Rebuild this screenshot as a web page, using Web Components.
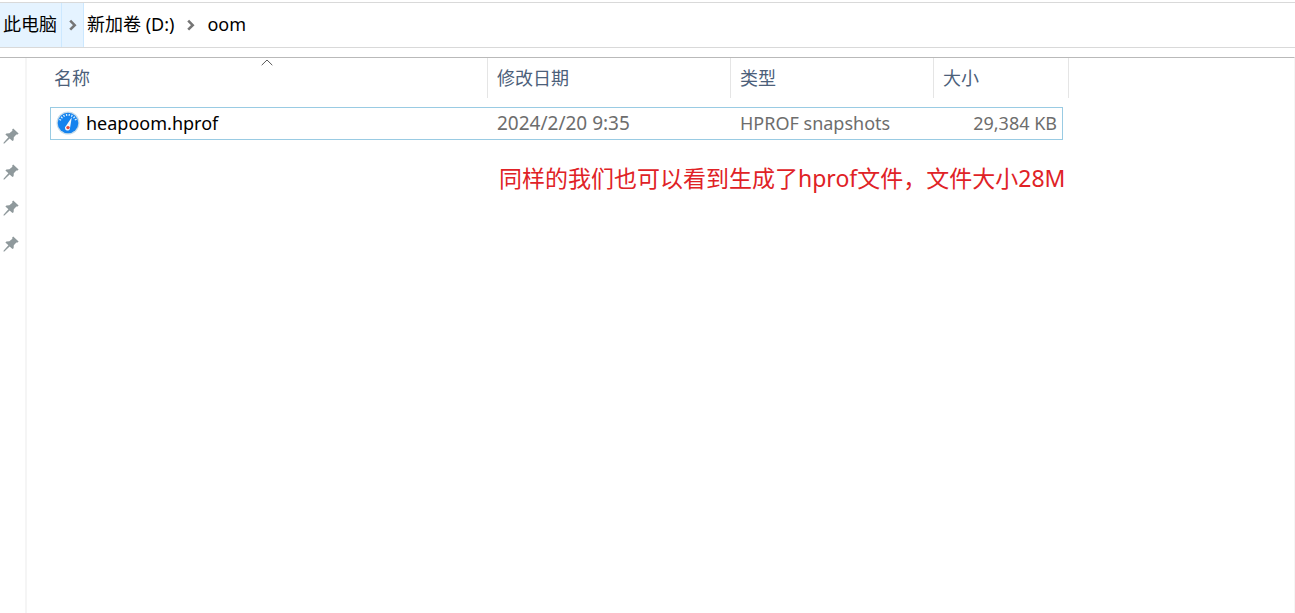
<!DOCTYPE html>
<html lang="zh-CN">
<head>
<meta charset="utf-8">
<title>oom</title>
<style>
html, body { margin: 0; height: 100%; background: #fff; }
body { font: 18px/24px "Noto Sans", "Noto Sans CJK SC", sans-serif; color: #000; }
</style>
</head>
<body>
<file-explorer></file-explorer>
<script>
const define = (name, html) => {
  const template = document.createElement('template');
  template.innerHTML = html;
  customElements.define(name, class extends HTMLElement {
    constructor() {
      super();
      this.attachShadow({ mode: 'open' }).append(template.content.cloneNode(true));
    }
  });
};

define('chevron-icon', `
<style>:host { display: block; width: 8px; height: 12px; } svg { display: block; }</style>
<svg width="8" height="12" viewBox="0 0 8 12" fill="none" stroke="#757575" stroke-width="2.6"><path d="M1.2 1.7 5.7 6.2 1.2 10.7"/></svg>`);

define('pin-icon', `
<style>:host { display: block; width: 16px; height: 16px; } svg { display: block; }</style>
<svg width="16" height="16" viewBox="0 0 16 16" fill="#8f999c"><path d="M10.2.6 15.6 5.6 14.6 6.5 13.4 6.4 10.8 9.2 10.6 12.2 9.5 13 6.6 10.4 1.4 15.4.4 15.6.7 14.4 5.4 9.2 2.4 6.4 3.4 5.4 6.4 5.2 9.4 2.7 9.2 1.4Z"/></svg>`);

define('gauge-icon', `
<style>:host { display: block; width: 24px; height: 24px; } svg { display: block; }</style>
<svg width="24" height="24" viewBox="0 0 24 24">
  <circle cx="12" cy="12" r="11.5" fill="#c9dce9"/>
  <circle cx="12" cy="12" r="10.3" fill="#1583ee"/>
  <path d="M4 9.3A8.6 8.6 0 0 1 20 9.3" fill="none" stroke="#d9efff" stroke-width="2" stroke-dasharray="1.2 1.5"/>
  <path d="M15.8 6.2 10.1 14.8a2.6 2.6 0 1 0 4 1.6Z" fill="#f4f8fb"/>
  <circle cx="12" cy="16.6" r="1.7" fill="#e34a3c"/>
</svg>`);

define('address-bar', `
<style>
  :host { display: block; padding-top: 2px; background: #fff; }
  nav { display: flex; align-items: stretch; height: 44px; border-top: 1px solid #d9d9d9; border-bottom: 1px solid #d9d9d9; }
  a { display: flex; align-items: center; color: #000; text-decoration: none; padding: 0 4px 2px 3px; }
  button { display: flex; align-items: center; justify-content: center; width: 26px; border: 0; padding: 0; background: none; }
  .active { background: #e5f3ff; }
  a.active { border-right: 1px solid #cce8ff; }
  button.active { width: 22px; border-right: 1px solid #cce8ff; box-sizing: border-box; }
</style>
<nav aria-label="路径">
  <a class="active" href="#pc">此电脑</a><button class="active" aria-label="展开此电脑"><chevron-icon></chevron-icon></button>
  <a href="#d">新加卷 (D:)</a><button aria-label="展开新加卷"><chevron-icon></chevron-icon></button>
  <a href="#oom">oom</a>
</nav>`);

define('quick-access', `
<style>
  :host { display: flex; flex-direction: column; align-items: flex-start; gap: 20px; box-sizing: border-box; width: 27px; padding: 70px 0 0 3px; border-right: 2px solid #f5f5f5; }
</style>
<pin-icon></pin-icon><pin-icon></pin-icon><pin-icon></pin-icon><pin-icon></pin-icon>`);

define('file-list', `
<style>
  :host { display: block; }
  table { table-layout: fixed; width: 1019px; border-spacing: 0; }
  .name { width: 438px; } .date { width: 243px; } .type { width: 203px; } .size { width: 129px; } .end { width: 6px; }
  th, td { box-sizing: border-box; text-align: left; font-weight: 400; white-space: nowrap; }
  th { position: relative; height: 40px; padding: 0 9px; color: #4c607a; border-right: 1px solid #e5e5e5; }
  th:first-child { padding-left: 4px; }
  th svg { position: absolute; top: 1px; left: 50%; margin-left: -8px; }
  tbody::before { content: ""; display: block; height: 9px; }
  td { height: 33px; padding: 0 9px 2px; color: #6d6d6d; border: 0 solid #99cbe3; border-width: 1px 0; }
  td:first-child { border-left-width: 1px; padding-left: 5px; color: #000; }
  td:last-child { border-right-width: 1px; padding-right: 5px; text-align: right; }
  td:nth-child(2) { font-size: 19px; }
  .file { display: flex; align-items: center; gap: 6px; }
</style>
<table>
  <colgroup><col class="name"><col class="date"><col class="type"><col class="size"><col class="end"></colgroup>
  <thead><tr>
    <th scope="col" aria-sort="ascending">名称<svg width="12" height="7" viewBox="0 0 12 7" fill="none" stroke="#5a5a5a"><path d="M.7 6.2 6 1 11.3 6.2"/></svg></th>
    <th scope="col">修改日期</th><th scope="col">类型</th><th scope="col" colspan="2">大小</th>
  </tr></thead>
  <tbody><tr>
    <td><div class="file"><gauge-icon></gauge-icon><span>heapoom.hprof</span></div></td>
    <td>2024/2/20 9:35</td><td>HPROF snapshots</td><td>29,384 KB</td>
  </tr></tbody>
</table>`);

define('red-note', `
<style>:host { display: block; color: #e02226; font-size: 23px; line-height: 32px; white-space: nowrap; }</style>
<slot></slot>`);

define('file-explorer', `
<style>
  :host { display: flex; flex-direction: column; min-height: 100vh; }
  .body { display: flex; flex: 1; margin-top: 9px; border-top: 1px solid #b9b9b9; border-right: 1px solid #f5f5f5; }
  main { flex: 1; padding-left: 23px; }
  red-note { padding: 22px 0 0 449px; }
</style>
<address-bar></address-bar>
<div class="body">
  <quick-access></quick-access>
  <main><file-list></file-list><red-note>同样的我们也可以看到生成了hprof文件，文件大小28M</red-note></main>
</div>`);
</script>
</body>
</html>
